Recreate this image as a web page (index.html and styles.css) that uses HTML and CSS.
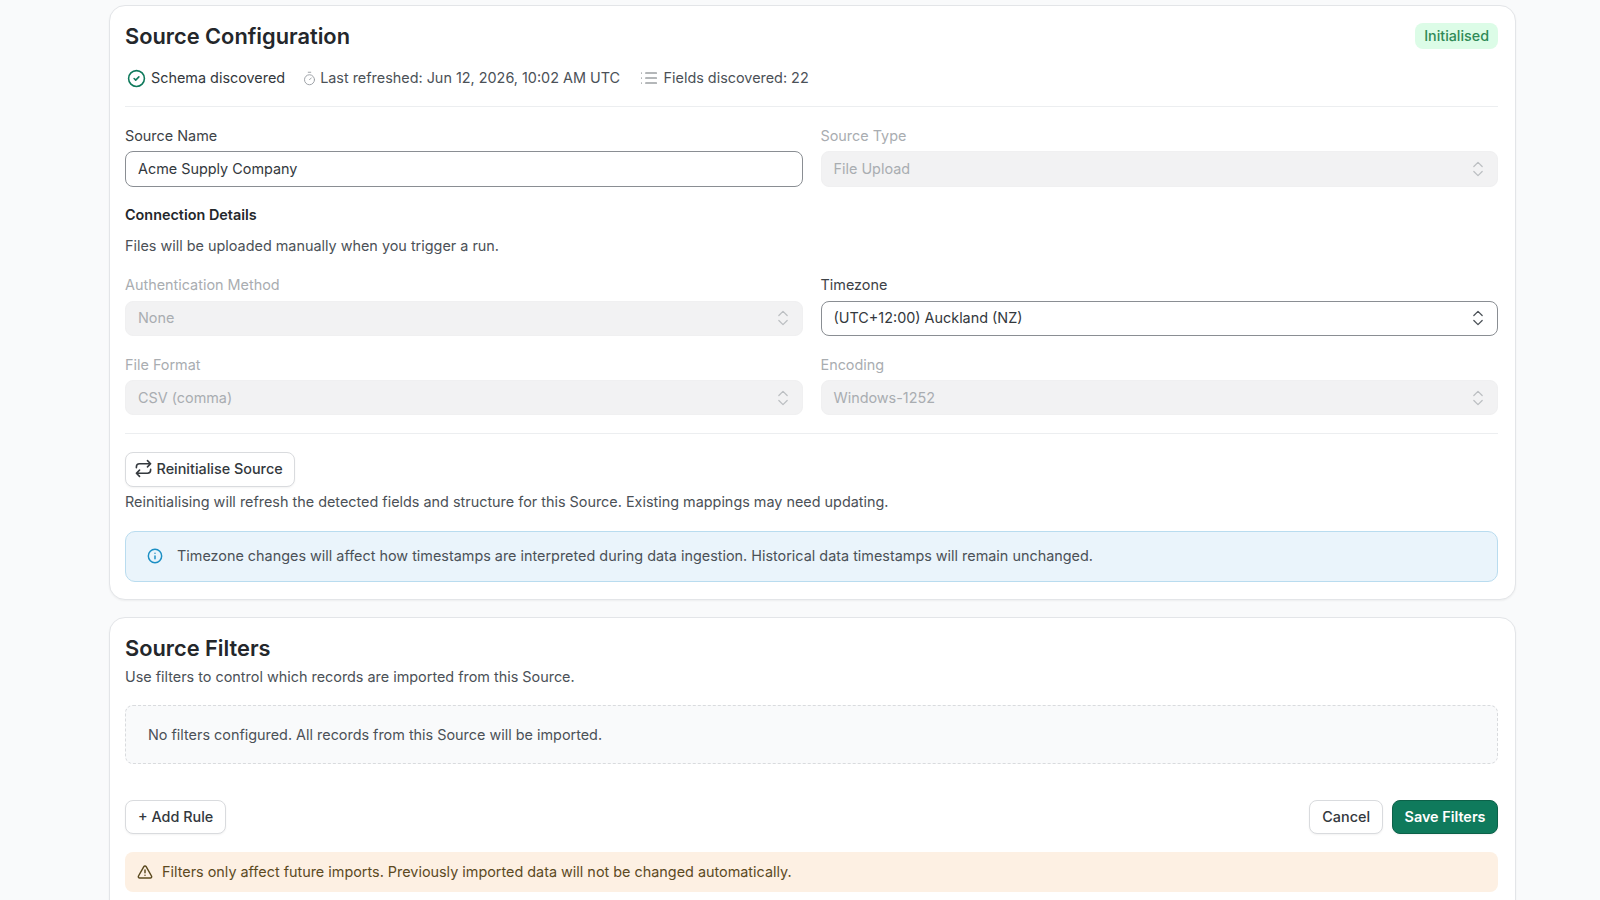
FILE: index.html
```html
<!DOCTYPE html>
<html lang="en">
<head>
<meta charset="UTF-8">
<title>Source Configuration</title>
<link rel="stylesheet" href="styles.css">
</head>
<body>
<main class="page">
  <section class="card">
    <div class="card-head">
      <h2 class="card-title">Source Configuration</h2>
      <span class="badge">Initialised</span>
    </div>
    <div class="stats">
      <span class="stat stat-ok">
        <svg class="icon icon-ok" viewBox="0 0 24 24"><circle cx="12" cy="12" r="10"/><path d="m9 12 2 2 4-4"/></svg>
        Schema discovered
      </span>
      <span class="stat stat-time">
        <svg class="icon icon-timer" viewBox="0 0 24 24"><path d="M10 2h4M12 14l3-3"/><circle cx="12" cy="14" r="8"/></svg>
        Last refreshed: Jun 12, 2026, 10:02 AM UTC
      </span>
      <span class="stat stat-fields">
        <svg class="icon icon-list" viewBox="0 0 24 24"><path d="M3 12h.01M3 18h.01M3 6h.01M8 12h13M8 18h13M8 6h13"/></svg>
        Fields discovered: 22
      </span>
    </div>

    <div class="form-grid first-row">
      <div class="field">
        <label class="label">Source Name</label>
        <input class="input" type="text" value="Acme Supply Company">
      </div>
      <div class="field disabled">
        <label class="label">Source Type</label>
        <div class="select">File Upload
          <svg class="chevrons" viewBox="0 0 24 24"><path d="m7 15 5 5 5-5M7 9l5-5 5 5"/></svg>
        </div>
      </div>
    </div>

    <h3 class="sub-title">Connection Details</h3>
    <p class="sub-text">Files will be uploaded manually when you trigger a run.</p>

    <div class="form-grid">
      <div class="field disabled">
        <label class="label">Authentication Method</label>
        <div class="select">None
          <svg class="chevrons" viewBox="0 0 24 24"><path d="m7 15 5 5 5-5M7 9l5-5 5 5"/></svg>
        </div>
      </div>
      <div class="field">
        <label class="label">Timezone</label>
        <div class="select">(UTC+12:00) Auckland (NZ)
          <svg class="chevrons" viewBox="0 0 24 24"><path d="m7 15 5 5 5-5M7 9l5-5 5 5"/></svg>
        </div>
      </div>
      <div class="field disabled">
        <label class="label">File Format</label>
        <div class="select">CSV (comma)
          <svg class="chevrons" viewBox="0 0 24 24"><path d="m7 15 5 5 5-5M7 9l5-5 5 5"/></svg>
        </div>
      </div>
      <div class="field disabled">
        <label class="label">Encoding</label>
        <div class="select">Windows-1252
          <svg class="chevrons" viewBox="0 0 24 24"><path d="m7 15 5 5 5-5M7 9l5-5 5 5"/></svg>
        </div>
      </div>
    </div>

    <div class="divider"></div>

    <button class="btn btn-reinit">
      <svg class="icon icon-repeat" viewBox="0 0 24 24"><path d="m17 2 4 4-4 4M3 11v-1a4 4 0 0 1 4-4h14M7 22l-4-4 4-4M21 13v1a4 4 0 0 1-4 4H3"/></svg>
      Reinitialise Source
    </button>
    <p class="help-text">Reinitialising will refresh the detected fields and structure for this Source. Existing mappings may need updating.</p>

    <div class="notice-info">
      <svg class="icon icon-info" viewBox="0 0 24 24"><circle cx="12" cy="12" r="10"/><path d="M12 16v-4M12 8h.01"/></svg>
      Timezone changes will affect how timestamps are interpreted during data ingestion. Historical data timestamps will remain unchanged.
    </div>
  </section>

  <section class="card card-filters">
    <h2 class="card-title">Source Filters</h2>
    <p class="filters-text">Use filters to control which records are imported from this Source.</p>
    <div class="empty-box">No filters configured. All records from this Source will be imported.</div>
    <div class="actions">
      <button class="btn">+ Add Rule</button>
      <div class="actions-right">
        <button class="btn">Cancel</button>
        <button class="btn btn-primary">Save Filters</button>
      </div>
    </div>
    <div class="notice-warn">
      <svg class="icon icon-warn" viewBox="0 0 24 24"><path d="m21.73 18-8-14a2 2 0 0 0-3.48 0l-8 14A2 2 0 0 0 4 21h16a2 2 0 0 0 1.73-3"/><path d="M12 9v4M12 17h.01"/></svg>
      Filters only affect future imports. Previously imported data will not be changed automatically.
    </div>
  </section>
</main>
</body>
</html>
```

FILE: styles.css
```css
html, body {
  height: 100%;
  margin: 0;
  overflow: hidden;
}
body {
  background-color: #f9fafb;
  color: #1f2328;
  font-family: Inter, "Liberation Sans", sans-serif;
  font-size: 14.4px;
  line-height: 20px;
}
.page {
  display: flex;
  flex-direction: column;
  gap: 17px;
  width: 1407px;
  margin-left: 109px;
  padding-top: 5px;
}
.card {
  flex-shrink: 0;
  box-sizing: border-box;
  height: 595px;
  padding: 16px 17px 16px 15px;
  background-color: #fff;
  border: 1px solid #e3e5e8;
  border-radius: 16px;
  box-shadow: 0 1px 2px rgba(0,0,0,0.05);
}
.card-filters {
  height: 320px;
}
.card-head {
  display: flex;
  justify-content: space-between;
  align-items: center;
  height: 28px;
}
.card-title {
  margin: 0;
  font-size: 21.8px;
  line-height: 28px;
  font-weight: 600;
  color: #24272b;
}
.badge {
  padding: 3px 9px;
  background-color: #dcfce7;
  border-radius: 8px;
  color: #2f8a57;
  font-size: 14.3px;
  font-weight: 500;
}
.stats {
  display: flex;
  align-items: center;
  height: 20px;
  margin-top: 18px;
  padding-bottom: 18px;
  border-bottom: 1px solid #eceef0;
  color: #4b5157;
}
.stat {
  display: flex;
  align-items: center;
}
.stat-ok {
  gap: 5px;
  color: #33383d;
}
.stat-time {
  gap: 3px;
  margin-left: 17px;
}
.stat-fields {
  gap: 5px;
  margin-left: 18.5px;
}
.icon {
  flex-shrink: 0;
  width: 16px;
  height: 16px;
  fill: none;
  stroke: currentColor;
  stroke-width: 2;
  stroke-linecap: round;
  stroke-linejoin: round;
}
.icon-ok {
  width: 19px;
  height: 19px;
  margin-left: 2px;
  color: #0f7a5c;
}
.icon-timer {
  width: 15px;
  height: 15px;
  stroke-width: 1.5;
  color: #9a9ea3;
}
.icon-list {
  width: 20px;
  height: 20px;
  stroke-width: 1.4;
  color: #6b7075;
}
.icon-repeat {
  width: 19px;
  height: 19px;
}
.form-grid {
  display: grid;
  grid-template-columns: 1fr 1fr;
  column-gap: 18px;
  row-gap: 18px;
}
.first-row {
  margin-top: 18px;
}
.first-row .field {
  gap: 5px;
}
.field {
  display: flex;
  flex-direction: column;
  gap: 5.5px;
}
.label {
  padding-top: 1px;
  color: #3d4247;
}
.input, .select {
  box-sizing: border-box;
  width: 100%;
  height: 35px;
  padding: 0 9px 0 12px;
  background-color: #fff;
  border: 1px solid #8a8e93;
  border-radius: 8px;
  color: #33383d;
  font-family: inherit;
  font-size: 14.4px;
  outline: none;
}
.first-row .input, .first-row .select {
  height: 36px;
}
.first-row .input {
  padding-bottom: 1px;
}
.select {
  display: flex;
  align-items: center;
  justify-content: space-between;
}
.chevrons {
  width: 20px;
  height: 20px;
  fill: none;
  stroke: #4b5157;
  stroke-width: 1.5;
  stroke-linecap: round;
  stroke-linejoin: round;
}
.disabled .label {
  color: #a9adb1;
}
.disabled .select {
  background-color: #f2f2f3;
  border-color: #f0f0f1;
  color: #a9adb1;
}
.disabled .chevrons {
  stroke: #bcbfc2;
}
.sub-title {
  margin: 18px 0 0;
  font-size: 14.4px;
  line-height: 20px;
  font-weight: 600;
  color: #24272b;
}
.sub-text {
  margin: 11px 0 18px;
  color: #4b5157;
}
.divider {
  height: 1px;
  margin: 18px 0;
  background-color: #eceef0;
}
.btn {
  display: inline-flex;
  align-items: center;
  gap: 3.5px;
  box-sizing: border-box;
  height: 34px;
  padding: 0 12px 1.5px;
  background-color: #fff;
  border: 1px solid #d9dbde;
  border-radius: 8px;
  box-shadow: 0 1px 2px rgba(0,0,0,0.05);
  color: #33383d;
  font-family: inherit;
  font-size: 14.4px;
  font-weight: 500;
}
.btn-reinit {
  height: 35px;
  padding: 0 11px 2px 8px;
}
.btn-primary {
  padding: 0 11.5px 1.5px;
  background-color: #0f7a5c;
  border-color: #0c6149;
  color: #fff;
  font-weight: 600;
}
.help-text {
  margin: 5px 0 0;
  color: #4b5157;
}
.notice-info {
  display: flex;
  align-items: center;
  gap: 14px;
  box-sizing: border-box;
  height: 51px;
  margin-top: 19px;
  padding: 0 21px 1px;
  background-color: #eaf4fb;
  border: 1px solid #b9dcef;
  border-radius: 10px;
  color: #4b5157;
}
.icon-info {
  stroke-width: 2.2;
  color: #1b8fc4;
}
.filters-text {
  margin: 5px 0 0;
  color: #4b5157;
}
.empty-box {
  display: flex;
  align-items: center;
  box-sizing: border-box;
  height: 59px;
  margin-top: 18px;
  padding: 0 22px;
  background-color: #f9fafb;
  border: 1px dashed #d9dbde;
  border-radius: 8px;
  color: #4b5157;
}
.actions {
  display: flex;
  justify-content: space-between;
  margin-top: 36px;
}
.actions-right {
  display: flex;
  gap: 9px;
}
.notice-warn {
  display: flex;
  align-items: center;
  gap: 9px;
  box-sizing: border-box;
  height: 40px;
  margin-top: 18px;
  padding: 0 12px;
  background-color: #fdf0e3;
  border-radius: 8px;
  color: #5c4a1f;
}
.icon-warn {
  stroke-width: 2.2;
  color: #5c4a1f;
}
```
